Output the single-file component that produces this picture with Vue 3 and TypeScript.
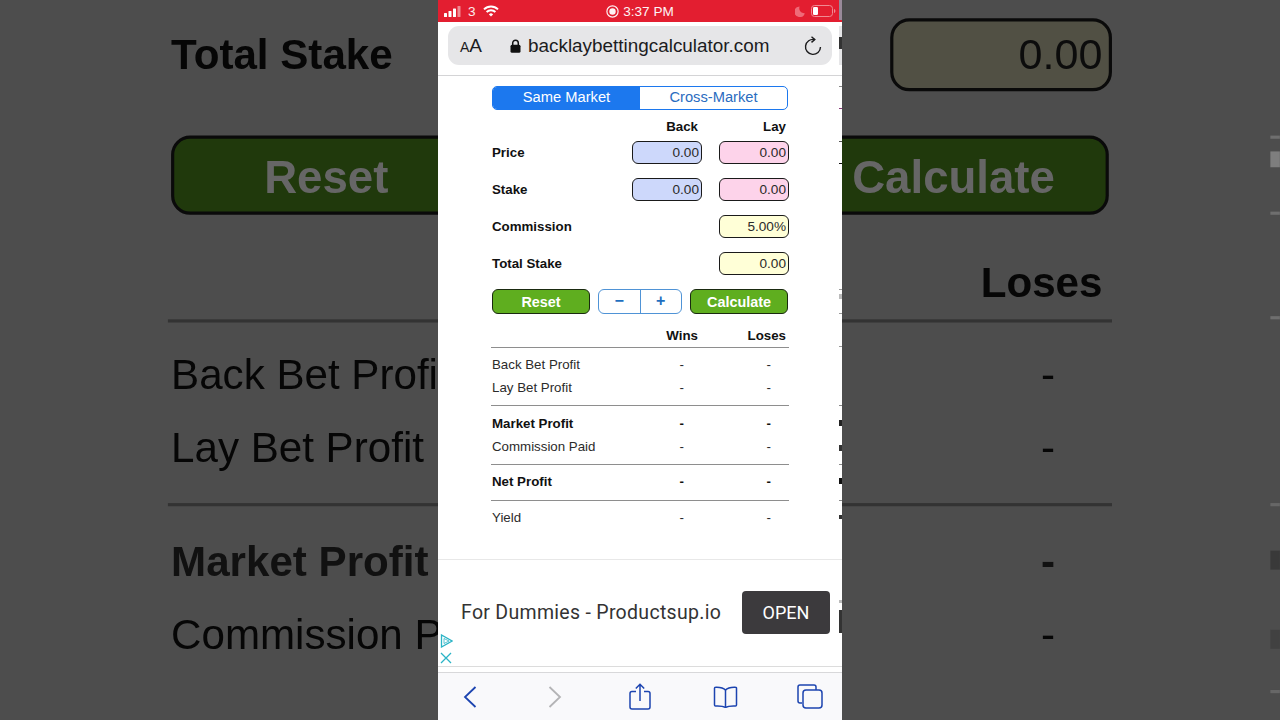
<script setup lang="ts">
type Row = { label: string; strong?: boolean }
type Tick = { top: number; h: number; color: string }

const layers = ['back', 'front']

const inputRows = [
  { label: 'Price', back: '0.00', lay: '0.00' },
  { label: 'Stake', back: '0.00', lay: '0.00' },
  { label: 'Commission', lay: '5.00%' },
  { label: 'Total Stake', lay: '0.00' },
]

const groups: Row[][] = [
  [{ label: 'Back Bet Profit' }, { label: 'Lay Bet Profit' }],
  [{ label: 'Market Profit', strong: true }, { label: 'Commission Paid' }],
  [{ label: 'Net Profit', strong: true }],
  [{ label: 'Yield' }],
]

// bits of the next column that peek in at the right edge, top is relative to .calc
const ticks: Tick[] = [
  { top: -76, h: 20, color: '#9a8a9a' },
  { top: -50, h: 39, color: '#e6e6e8' },
  { top: -39, h: 12, color: '#333' },
  { top: 10, h: 1, color: '#888' },
  { top: 32, h: 1, color: '#8a3a7a' },
  { top: 65, h: 1, color: '#555' },
  { top: 87, h: 1, color: '#111' },
  { top: 213, h: 1, color: '#999' },
  { top: 218, h: 5, color: '#bbb' },
  { top: 237, h: 1, color: '#999' },
  { top: 270, h: 1, color: '#999' },
  { top: 329, h: 1, color: '#888' },
  { top: 344, h: 6, color: '#222' },
  { top: 369, h: 6, color: '#333' },
  { top: 388, h: 1, color: '#888' },
  { top: 402, h: 6, color: '#111' },
  { top: 424, h: 1, color: '#888' },
  { top: 439, h: 4, color: '#333' },
  { top: 524, h: 3, color: '#bbb' },
  { top: 534, h: 23, color: '#333' },
]
</script>

<template>
  <div class="stage">
    <div v-for="layer in layers" :key="layer" :class="['phone', layer]">
      <template v-if="layer === 'front'">
        <header class="status">
          <div class="status-left">
            <svg width="17" height="11" viewBox="0 0 17 11">
              <rect x="0" y="7" width="3" height="4" rx=".6" fill="#fff" />
              <rect x="4.500" y="5" width="3" height="6" rx=".6" fill="#fff" />
              <rect x="9" y="2.500" width="3" height="8.500" rx=".6" fill="#fff" />
              <rect x="13.500" y="0" width="3" height="11" rx=".6" fill="#f08a92" />
            </svg>
            <span class="carrier">3</span>
            <svg width="16" height="12" viewBox="0 0 16 12" fill="none" stroke="#fff" stroke-width="2">
              <path d="M1 4.400a10 10 0 0 1 14 0" />
              <path d="M3.600 7a6.300 6.300 0 0 1 8.800 0" />
              <path d="M8 11.600 5.900 9.400a3 3 0 0 1 4.200 0z" fill="#fff" stroke="none" />
            </svg>
          </div>
          <div class="status-mid">
            <svg width="13" height="13" viewBox="0 0 13 13">
              <circle cx="6.500" cy="6.500" r="5.600" fill="none" stroke="#fff" stroke-width="1.200" />
              <circle cx="6.500" cy="6.500" r="3.200" fill="#fff" />
            </svg>
            <span>3:37 PM</span>
          </div>
          <div class="status-right">
            <svg width="10" height="11" viewBox="0 0 10 11">
              <path d="M4.600.4A5.300 5.300 0 1 0 9.800 7.200 5 5 0 0 1 4.600.4z" fill="#ef6b78" />
            </svg>
            <svg width="25" height="12" viewBox="0 0 25 12">
              <rect x=".5" y=".5" width="21" height="11" rx="3" fill="none" stroke="#f08a92" />
              <rect x="2" y="2" width="5" height="8" rx="1.300" fill="#fff" />
              <path d="M23 4v4c.9-.3 1.400-1 1.400-2S23.900 4.300 23 4z" fill="#f08a92" />
            </svg>
          </div>
        </header>
        <div class="addr-wrap">
          <div class="addr">
            <span class="aa"><small>A</small>A</span>
            <div class="host">
              <svg width="11" height="14" viewBox="0 0 11 14">
                <path d="M2.700 6V4a2.800 2.800 0 0 1 5.600 0v2" fill="none" stroke="#111" stroke-width="1.500" />
                <rect x=".5" y="5.800" width="10" height="8" rx="1.500" fill="#111" />
              </svg>
              <span>backlaybettingcalculator.com</span>
            </div>
            <svg class="reload" width="18" height="20" viewBox="0 0 18 20" fill="none" stroke="#1c1c1e" stroke-width="1.400">
              <path d="M10.500 3.500A7.500 7.500 0 1 0 16.500 11" />
              <path d="M7.500.8l3.300 2.700-3.300 2.900" />
            </svg>
          </div>
        </div>
      </template>

      <main class="calc">
        <div class="segment">
          <span class="seg-on">Same Market</span>
          <span class="seg-off">Cross-Market</span>
        </div>

        <div class="form-head">
          <span></span>
          <b>Back</b>
          <b>Lay</b>
        </div>
        <div class="form-rows">
          <div v-for="row in inputRows" :key="row.label" class="form-row">
            <label>{{ row.label }}</label>
            <input v-if="row.back" class="field blue" :value="row.back" readonly />
            <span v-else></span>
            <input :class="['field', row.back ? 'pink' : 'yellow']" :value="row.lay" readonly />
          </div>
        </div>

        <div class="actions">
          <button class="go">Reset</button>
          <div class="stepper">
            <span>−</span>
            <span>+</span>
          </div>
          <button class="go">Calculate</button>
        </div>

        <div class="results">
          <div class="res-head">
            <span></span>
            <b class="wins">Wins</b>
            <b>Loses</b>
          </div>
          <div v-for="(group, i) in groups" :key="i" class="res-group">
            <div v-for="row in group" :key="row.label" :class="['res-row', { strong: row.strong }]">
              <span class="res-label">{{ row.label }}</span>
              <span class="val wins">-</span>
              <span class="val">-</span>
            </div>
          </div>
        </div>

        <i v-for="t in ticks" :key="t.top" class="tick" :style="{ top: t.top + 'px', height: t.h + 'px', background: t.color }"></i>
      </main>

      <template v-if="layer === 'front'">
        <aside class="ad">
          <span class="ad-text">For Dummies - Productsup.io</span>
          <button class="ad-open">OPEN</button>
          <div class="ad-marks">
            <svg width="13" height="14" viewBox="0 0 13 14" fill="none" stroke="#2bb4c6" stroke-width="1.300">
              <path d="M1.500 1v12L12 7z" />
              <path d="M4 4.500v5L9 7z" stroke-width=".8" />
            </svg>
            <svg width="12" height="12" viewBox="0 0 12 12" fill="none" stroke="#2bb4c6" stroke-width="1.300">
              <path d="M1 1l10 10M11 1 1 11" />
            </svg>
          </div>
        </aside>
        <nav class="toolbar">
          <svg width="14" height="24" viewBox="0 0 14 24" fill="none" stroke="#1c44b0" stroke-width="1.800">
            <path d="M12.500 2 2 12l10.500 10" />
          </svg>
          <svg width="14" height="24" viewBox="0 0 14 24" fill="none" stroke="#b4b4b6" stroke-width="1.800">
            <path d="M1.500 2 12 12 1.500 22" />
          </svg>
          <svg width="22" height="27" viewBox="0 0 22 27" fill="none" stroke="#1c44b0" stroke-width="1.500">
            <path d="M7 8.500H3a2 2 0 0 0-2 2V24a2 2 0 0 0 2 2h16a2 2 0 0 0 2-2V10.500a2 2 0 0 0-2-2h-4" />
            <path d="M11 18V1.500M6.800 5.500 11 1.300l4.200 4.200" />
          </svg>
          <svg width="25" height="22" viewBox="0 0 25 22" fill="none" stroke="#1c44b0" stroke-width="1.500">
            <path d="M12.500 4C10.500 1.800 7 1 2.500 1.200 1.800 1.200 1.500 1.600 1.500 2.200V19c0 .6.400 1 1 1 4.500-.2 8 .2 10 1.500 2-1.300 5.500-1.700 10-1.500.6 0 1-.4 1-1V2.200c0-.6-.3-1-1-1C18 1 14.500 1.800 12.500 4z" />
            <path d="M12.500 4v17" />
          </svg>
          <svg width="26" height="25" viewBox="0 0 26 25" fill="none" stroke="#1c44b0" stroke-width="1.500">
            <path d="M5 19H3a2 2 0 0 1-2-2V3a2 2 0 0 1 2-2h14a2 2 0 0 1 2 2v3" />
            <rect x="6" y="6" width="19" height="18" rx="3" />
          </svg>
        </nav>
      </template>
    </div>
  </div>
</template>

<style scoped>
.stage {
  position: relative;
  width: 1280px;
  height: 720px;
  overflow: hidden;
  background: #4d4d4d;
  font-family: "Liberation Sans", Arial, sans-serif;
  color: #111;
}

.phone {
  width: 404px;
  box-sizing: border-box;
}

.front {
  position: relative;
  height: 720px;
  margin: 0 auto;
  display: flex;
  flex-direction: column;
  background: #fff;
  overflow: hidden;
}

/* same page, blown up to fill the video frame and dimmed */
.back {
  position: absolute;
  left: 0;
  top: 0;
  padding-top: 76px;
  transform-origin: 0 0;
  transform: scale(3.168) translateY(-246.2px);
  filter: blur(0.2px);
}

.back .calc {
  height: 483px;
}

.back .field {
  background: #515044;
  border-color: #0a0a0a;
  color: #0c0c0c;
}

.back .go {
  background: #20390c;
  color: #666;
  border-color: #0a0a0a;
}

.back .res-head,
.back .res-group + .res-group {
  border-color: #333;
}

.back .res-row,
.back .form-row label,
.back .res-head b {
  color: #060606;
}

.back .tick {
  opacity: 0.45;
}

/* stops where the phone starts */
.back .res-label {
  width: 85px;
  overflow: hidden;
  white-space: nowrap;
}

/* these sit off frame or behind the phone in the big copy */
.back .stepper,
.back .segment,
.back .form-head,
.back .form-row:not(:last-child),
.back .res-group:nth-child(n + 4),
.back .wins {
  visibility: hidden;
}

.status {
  height: 22px;
  flex: none;
  display: grid;
  grid-template-columns: 1fr auto 1fr;
  align-items: center;
  padding: 0 6px;
  background: #e31e30;
  color: #fff;
  font-size: 13.6px;
}

.status-left {
  display: flex;
  align-items: center;
  gap: 7px;
}

.carrier {
  opacity: 0.9;
}

.status-mid {
  display: flex;
  align-items: center;
  gap: 4px;
  opacity: 0.95;
}

.status-right {
  display: flex;
  align-items: center;
  justify-content: flex-end;
  gap: 6px;
}

.addr-wrap {
  height: 54px;
  flex: none;
  box-sizing: border-box;
  padding: 4px 10px 0;
  border-bottom: 1px solid #d4d4d6;
}

.addr {
  height: 39px;
  display: flex;
  align-items: center;
  padding: 0 10px 0 12px;
  border-radius: 11px;
  background: #e6e6e8;
}

.aa {
  width: 50px;
  font-size: 19px;
  line-height: 1;
  color: #1c1c1e;
}

.aa small {
  font-size: 14px;
}

.host {
  flex: 1;
  display: flex;
  align-items: center;
  gap: 7px;
  font-size: 18.9px;
  color: #1c1c1e;
}

.calc {
  position: relative;
  flex: 1;
  box-sizing: border-box;
  padding: 10px 0 0 53px;
}

.segment {
  display: flex;
  width: 296px;
  height: 24px;
  margin-left: 1px;
  box-sizing: border-box;
  border: 1px solid #1c78ee;
  border-radius: 5px;
  overflow: hidden;
  font-size: 14.7px;
  line-height: 21px;
  text-align: center;
}

.segment span {
  flex: 1;
}

.seg-on {
  background: #1c78ee;
  color: #fff;
}

.seg-off {
  color: #2a6cc0;
}

.form-head,
.form-row,
.res-head,
.res-row {
  display: grid;
  grid-template-columns: 1fr 70px 70px;
  column-gap: 17px;
  width: 298px;
}

.form-head {
  height: 16px;
  margin-top: 9px;
  font-size: 13.300px;
  line-height: 16px;
  text-align: right;
}

.form-head b,
.res-head b {
  padding-right: 4px;
}

.form-head b:last-child,
.res-head b:last-child {
  padding-right: 3px;
}

.form-rows {
  display: flex;
  flex-direction: column;
  gap: 14px;
  margin-top: 6px;
}

.form-row {
  height: 23px;
}

.form-row label {
  padding-left: 1px;
  font-size: 13.300px;
  font-weight: 700;
  line-height: 24px;
}

.field {
  width: 70px;
  height: 23px;
  box-sizing: border-box;
  padding: 0 2px 1px 0;
  border: 1px solid #1a1a1a;
  border-radius: 6px;
  outline: none;
  font-family: inherit;
  font-size: 13.600px;
  text-align: right;
  color: #2a2a2a;
}

.blue {
  background: #cdd8fb;
}

.pink {
  background: #fdd3ea;
}

.yellow {
  background: #ffffd7;
}

.actions {
  display: grid;
  grid-template-columns: 98px 84px 98px;
  column-gap: 8px;
  margin: 14px 0 0 1px;
  height: 25px;
}

.go {
  padding: 0;
  border: 1px solid #1a2a10;
  border-radius: 6px;
  background: #5fae1f;
  color: #fff;
  font-family: inherit;
  font-size: 14.400px;
  font-weight: 700;
}

.stepper {
  display: flex;
  box-sizing: border-box;
  border: 1px solid #4f93d6;
  border-radius: 6px;
  color: #1f6fc0;
  font-size: 16px;
  font-weight: 700;
  line-height: 22px;
  text-align: center;
}

.stepper span {
  flex: 1;
}

.stepper span + span {
  border-left: 1px solid #4f93d6;
}

.results {
  width: 298px;
}

.res-head {
  height: 34px;
  box-sizing: border-box;
  padding-top: 14px;
  font-size: 13.300px;
  line-height: 16px;
  text-align: right;
  border-bottom: 1px solid #8e8e8e;
}

.res-group {
  padding: 5px 0 7px;
}

.res-group:nth-child(2) {
  padding-bottom: 6px;
}

.res-group:nth-child(3) {
  padding: 6px 0;
}

.res-group + .res-group {
  border-top: 1px solid #8e8e8e;
}

.res-row {
  height: 23px;
  font-size: 13.300px;
  line-height: 23px;
  color: #2b2b2b;
}

.res-row > span:first-child {
  padding-left: 1px;
}

.res-row.strong {
  font-weight: 700;
  color: #111;
}

.val {
  padding-right: 18px;
  text-align: right;
}

.tick {
  position: absolute;
  left: 401px;
  width: 3px;
  z-index: 1;
}

.ad {
  position: relative;
  flex: none;
  height: 108px;
  box-sizing: border-box;
  display: flex;
  align-items: center;
  justify-content: space-between;
  padding: 0 12px 2px 23px;
  border-top: 1px solid #e8e8e8;
  border-bottom: 1px solid #dcdcdc;
  font-family: Roboto, "Noto Sans", sans-serif;
}

.ad-text {
  font-size: 19.500px;
  letter-spacing: 0.3px;
  color: #333;
}

.ad-open {
  width: 88px;
  height: 43px;
  padding: 0;
  border: none;
  border-radius: 4px;
  background: #3c3a3d;
  color: #fff;
  font-family: inherit;
  font-size: 18px;
}

.ad-marks {
  position: absolute;
  left: 2px;
  bottom: 2px;
  display: flex;
  flex-direction: column;
  gap: 4px;
}

.toolbar {
  flex: none;
  height: 48px;
  margin-top: 5px;
  box-sizing: border-box;
  display: grid;
  grid-template-columns: repeat(5, 85px);
  justify-content: center;
  justify-items: center;
  align-items: center;
  border-top: 1px solid #d8d8da;
  background: #f9f9fb;
}
</style>
